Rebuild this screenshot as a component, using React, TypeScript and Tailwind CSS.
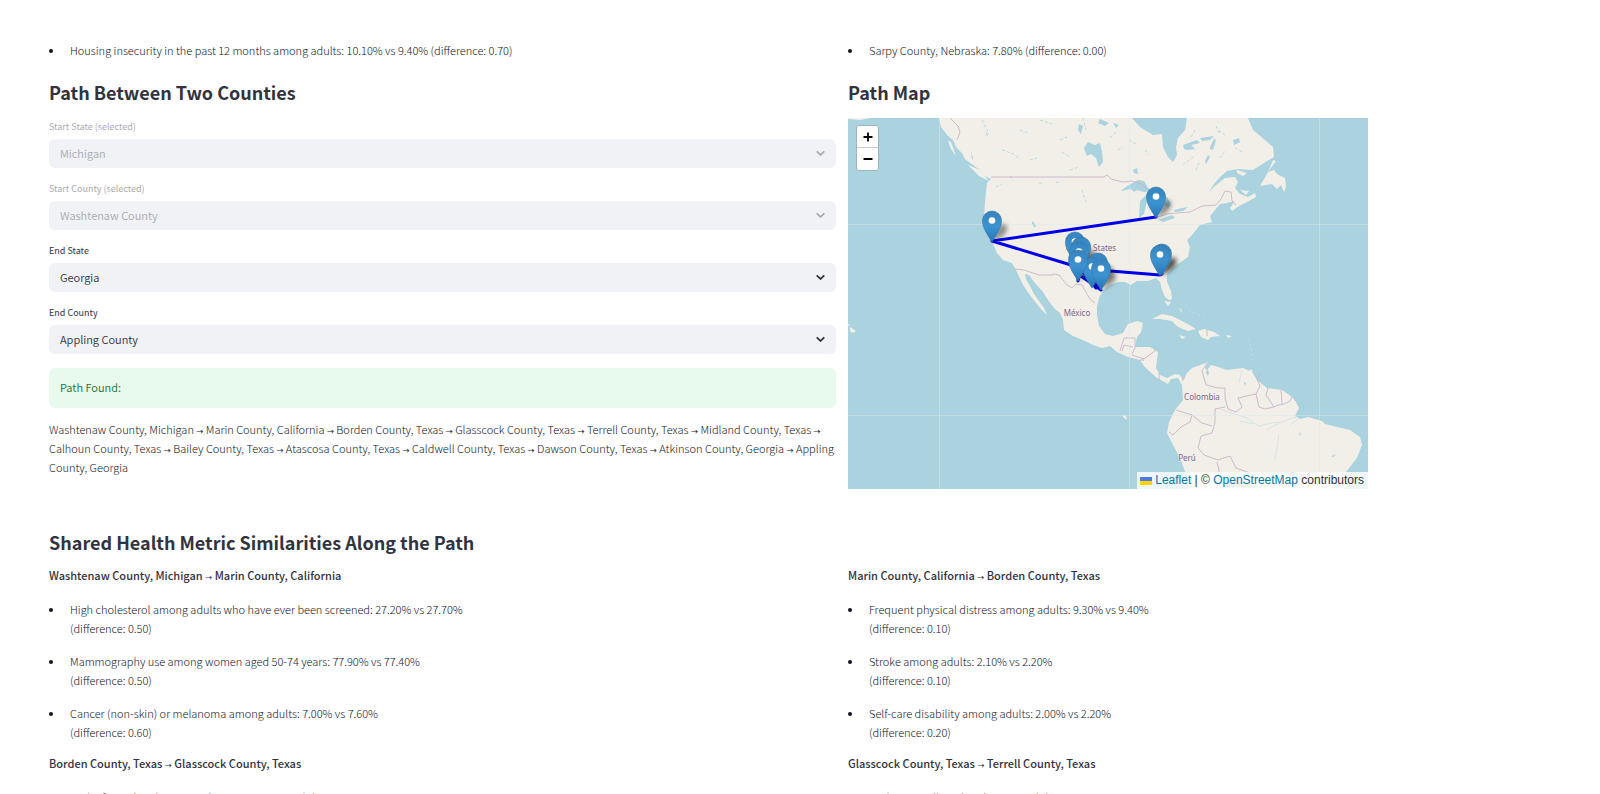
import React, { Fragment, useId } from "react";

const columns = "grid grid-cols-[787fr_703fr] gap-x-3";
const headingStyle = "text-[18px] font-bold leading-[28px] text-[#31333f]";

function ChevronDown() {
  return (
    <svg viewBox="0 0 24 24" aria-hidden="true" className="pointer-events-none absolute right-2 top-[7px] size-[15px]">
      <path fill="currentColor" d="M12.7 15.7a1 1 0 0 1-1.400 0L5.800 10.200a1.400 1.400 0 0 1 2-2L12 12.400l4.200-4.200a1.400 1.400 0 0 1 2 2z" />
    </svg>
  );
}

function SelectField({ label, value, disabled = false }: { label: string; value: string; disabled?: boolean }) {
  const id = useId();
  return (
    <div className={disabled ? "text-[#a9abb2]" : "text-[#31333f]"}>
      <label htmlFor={id} className="mb-1 block text-[9px] font-normal leading-[17px]">
        {label}
      </label>
      <div className="relative">
        <select
          id={id}
          disabled={disabled}
          defaultValue={value}
          className="block h-[29px] w-full appearance-none rounded-md bg-[#f0f2f6] px-[11px] text-[11px] font-[350] leading-[19px] opacity-100"
        >
          <option>{value}</option>
        </select>
        <ChevronDown />
      </div>
    </div>
  );
}

function Bullet({ children }: { children: React.ReactNode }) {
  return <li className="pl-1.5">{children}</li>;
}

function Route({ stops }: { stops: string[] }) {
  return (
    <>
      {stops.map((stop, index) => (
        <Fragment key={stop}>
          {index > 0 && (
            <>
              {"\u00a0"}
              <span className="text-[7px] font-medium leading-none">→</span>{" "}
            </>
          )}
          {stop}
        </Fragment>
      ))}
    </>
  );
}

type Metric = { text: string; difference: string };
type Step = { from: string; to: string; metrics: Metric[] };

const steps: Step[] = [
  {
    from: "Washtenaw County, Michigan",
    to: "Marin County, California",
    metrics: [
      { text: "High cholesterol among adults who have ever been screened: 27.20% vs 27.70%", difference: "0.50" },
      { text: "Mammography use among women aged 50-74 years: 77.90% vs 77.40%", difference: "0.50" },
      { text: "Cancer (non-skin) or melanoma among adults: 7.00% vs 7.60%", difference: "0.60" },
    ],
  },
  {
    from: "Marin County, California",
    to: "Borden County, Texas",
    metrics: [
      { text: "Frequent physical distress among adults: 9.30% vs 9.40%", difference: "0.10" },
      { text: "Stroke among adults: 2.10% vs 2.20%", difference: "0.10" },
      { text: "Self-care disability among adults: 2.00% vs 2.20%", difference: "0.20" },
    ],
  },
  {
    from: "Borden County, Texas",
    to: "Glasscock County, Texas",
    metrics: [{ text: "Lack of social and emotional support among adults: 30.60% vs 30.50%", difference: "0.10" }],
  },
  {
    from: "Glasscock County, Texas",
    to: "Terrell County, Texas",
    metrics: [{ text: "Feeling socially isolated among adults: 34.10% vs 34.10%", difference: "0.00" }],
  },
];

const path = [
  "Washtenaw County, Michigan",
  "Marin County, California",
  "Borden County, Texas",
  "Glasscock County, Texas",
  "Terrell County, Texas",
  "Midland County, Texas",
  "Calhoun County, Texas",
  "Bailey County, Texas",
  "Atascosa County, Texas",
  "Caldwell County, Texas",
  "Dawson County, Texas",
  "Atkinson County, Georgia",
  "Appling County, Georgia",
];

const pins = [
  [1156, 218], [992, 242], [1075, 263], [1081, 268], [1079, 273], [1162, 275],
  [1098, 284], [1092, 288], [1078, 281], [1101, 290], [1160, 276],
];

function Pin({ x, y }: { x: number; y: number }) {
  return (
    <g transform={`translate(${x} ${y})`}>
      <path d="M0 0C-7-11-9.500-15-9.500-21.500a9.500 9.500 0 0 1 19 0C9.500-15 7-11 0 0z" fill="url(#pin)" stroke="#3577a6" strokeWidth=".6" />
      <circle cy="-21.500" r="3.300" fill="#fff" />
    </g>
  );
}

function PathMap() {
  return (
    <div className="relative w-[520px] max-w-full overflow-hidden bg-[#aad3df] font-normal">
      <svg viewBox="848 118 520 371" role="img" aria-label="Path Map" className="block w-full">
        <defs>
          <linearGradient id="pin" x1="0" y1="0" x2="0" y2="1">
            <stop offset="0" stopColor="#3683bf" />
            <stop offset=".5" stopColor="#3c92cf" />
            <stop offset="1" stopColor="#2676bd" />
          </linearGradient>
          <filter id="soft" x="-50%" y="-50%" width="200%" height="200%">
            <feGaussianBlur stdDeviation="2" />
          </filter>
        </defs>
        <rect x="848" y="118" width="520" height="371" fill="#aad3df" />

        <g fill="#f2efe9">
          <path d="M939 118L941 127 948 136 953 140 956 147 962 153 965 159 973 165 980 170 983 175 991 179 987 183 986 192 985 203 984 217 987 230 992 242 997 253 1003 260 1012 263 1017 272 1022 283 1027 291 1033 299 1037 304 1041 309 1047 315 1044 308 1039 301 1034 294 1030 286 1026 279 1025 274 1029 275 1035 283 1043 292 1048 300 1054 308 1060 313 1063 320 1064 330 1073 336 1085 341 1093 345 1102 348 1110 346 1117 352 1128 357 1140 360 1144 366 1148 370 1157 378 1168 384 1171 379 1178 378 1182 385 1183 400 1175 410 1169 422 1167 433 1172 443 1180 458 1187 477 1188 489 1345 489 1346 472 1357 458 1362 445 1360 437 1350 430 1337 427 1325 424 1322 421 1308 417 1300 419 1295 416 1299 408 1296 402 1292 397 1282 390 1267 388 1257 380 1252 372 1243 368 1227 370 1215 366 1211 365 1207 370 1205 368 1208 362 1203 364 1192 368 1187 373 1183 380 1180 375 1175 374 1167 378 1160 375 1156 368 1158 352 1150 347 1135 347 1137 337 1141 332 1143 323 1137 321 1128 324 1123 333 1113 336 1105 334 1099 326 1097 315 1097 307 1099 298 1103 290 1110 285 1118 282 1125 282 1131 285 1137 281 1148 281 1156 278 1160 282 1162 290 1165 297 1169 300 1172 299 1171 291 1167 282 1167 274 1175 266 1188 257 1190 247 1187 240 1192 235 1200 225 1212 222 1210 216 1215 210 1220 204 1227 203 1235 201 1230 208 1232 211 1239 206 1247 202 1256 197 1255 193 1248 197 1240 194 1235 188 1238 182 1235 177 1225 178 1215 186 1209 192 1214 184 1220 177 1227 171 1238 169 1253 170 1267 161 1274 157 1273 147 1265 140 1253 130 1248 118 1187 118 1185 130 1178 138 1176 147 1177 155 1173 162 1168 157 1163 147 1162 134 1153 135 1140 127 1132 118z" />
          <path d="M1273 160l-5 12-8 14 12-2 5 5 4-4 3 7 2-5-1-9-8-4-3-4-6 2 8-11z" />
          <path d="M1237 170l10 3-4 3-6-3zM1240 190l9 1-3 4zM948 141l3 1 5 14-5-7zM968 165l12 5 9 11-10-5z" />
          <path d="M1152 319l10-5 10 2 14 7 10 6-8 2-10-4-6-6-12-2zM1198 331l6-2 10 3 6 4-9 1-3 3-7-3zM1179 335l7 2-4 2zM1226 335l6 1-4 2zM1250 369l3 2-3 2zM1164 301l7 1-3 4zM1179 307l3 4-1 1zM850 327l6 4-3 2-3-2zM848 324l2 1-2 1zM848 118h22l-10 2-12-1z" />
          <path d="M1122 415l4 1 1 4-3-2z" />
        </g>

        <g fill="#aad3df">
          <path d="M1120 191l9-6 9-5 6 1 4 7 5 3-9 1-7-2-3 2-3-3zM1139 218l1-17 7-7 5 1-5 6-3 13zM1159 194l8 3 4 7-3 4-5-5-2 6zM1158 220l14-5 3 3-12 4zM1174 210l8-2 6-1-5 4-8 1z" />
          <path d="M1088 142l7 3 5-2 2 9 1 10-4 5-3-9-5-4-4 2-3-8z" />
          <path d="M1079 124l4 2-2 8-3-4zM1100 119l9 4-4 3-7-3zM1113 123l6 2-3 3zM1133 170l4-2 1 6-4-1zM1207 369l2 3-1 4-2-3zM1032 221l4 4-1 3-3-4zM971 151l2 7-1 2zM985 131l3 4-1 1zM1183 145l14-5 3 3-9 2 4 4-8 1-3-1zM1200 138l14-2-4 4-8 1zM1210 147l4-8 2 1-3 10-3-1zM1233 140l6-2 1 4-6 3zM1172 124l5-2 1 4-5 2zM1205 161l3-6 2 2-4 7zM1299 431l2 3-1 2zM1331 456l6-2-4 3zM1244 382l2 1-1 3z" />
        </g>

        <g fill="none" stroke="#aad3df" strokeWidth=".8">
          <path d="M982 120l7 14M1002 150l12 4 4 4M1020 130l8 3M1040 120l12 4M1060 140l7-3M1062 152l8 5M1070 170l9-3M1030 160l7-2M1083 118l3 12M1110 138l6-6M1118 150l5-3M1129 140l7 4M1145 150l4 5M1183 165l10-8M1196 170l4-9M1220 158l5-7M1225 135l-8-6M1242 152l-7-4M1216 126l4 8M1195 130l-4 7M1082 190l3 10 2 3M1039 184l4-2M1056 182l5 1M996 187l6-3M1010 176l3 5" strokeDasharray="3 2" />
          <path d="M1220 409l12 4 15 5 12 8 13-3 10-1 8-3 6-2M1240 421l14 3M1266 430l13-7M1275 460l4-25M1290 425l8-6M1242 370l-3 13" strokeOpacity=".5" />
          <path d="M1248 340l3 7 1 6-1 8M1186 305l8 9M1195 312l9 6" stroke="#e8ebe4" strokeDasharray="1 4" />
        </g>

        <g fill="none" stroke="#c9b4c8" strokeWidth=".9">
          <path d="M991 177H1104l3-2 4 4 12 3 8-1 10 3 10 7 4 14 2 8 1 4 9-3 9-1 14-1 12-6 14-1 5-6 4-8 6 1 1 9 4 4" />
          <path d="M950 118l8 8 2 6-3 8M1015 269l9 1 15 5h14v-1l6 1 8 10 5 3 4-4 6 1 5 9 3 5 5 4" />
          <path d="M1120 351l4-13h11v10l-3 6M1132 355l12 4 12-9M1133 347l-9-2-2 6M1144 360l-4 0M1159 373v7M1207 330v6M1182 381l3-4" />
          <path d="M1207 363l-5 8 4 14 12 3h7v10l3 11 8 3 6-5-4-9 18-4 4-8-3-7 3-6M1256 394l3 13 6 2 9-2-8-12 2-7M1273 407l9-3-1-14M1282 405l8-4 2-4M1225 407l-10 2v13l-3 11-11 3-3 12 6 7 14 5 12-4 6 12 14 5M1176 410l16 5-2 7-9 5-8 8-4-3M1192 415l10 8 10 3M1217 462l2 8-2 19" />
        </g>

        <g stroke="#d9eaec" strokeOpacity=".5">
          <path d="M939.500 118v371M1129.500 118v371M1319.500 118v371M848 224.500h520M848 415.500h520" />
        </g>

        <g fill="#83648c" stroke="#f2efe9" strokeWidth="1" paintOrder="stroke" textAnchor="middle" className="font-['Noto_Sans',sans-serif] text-[8px]">
          <text x="1091" y="251">United States</text>
          <text x="1077" y="316">México</text>
          <text x="1202" y="400">Colombia</text>
          <text x="1187" y="461">Perú</text>
          <text x="1300" y="479">Brasil</text>
          <text x="1238" y="487">Bolivia</text>
        </g>

        <path
          fill="none"
          stroke="#0000e6"
          strokeWidth="3"
          strokeLinejoin="round"
          strokeLinecap="round"
          d="M1156 217L992 241 1081 268 1080 273 1078 281 1078 274 1101 290 1076 264 1096 288 1099 283 1080 268 1098 270 1160 275 1162 274"
        />
        <g fill="#000" fillOpacity=".4" filter="url(#soft)">
          {pins.map(([x, y]) => (
            <path key={`${x}-${y}`} d={`M${x} ${y}l6-15q8-6 9 0t-7 11z`} />
          ))}
        </g>
        {pins.map(([x, y]) => (
          <Pin key={`${x}-${y}`} x={x} y={y} />
        ))}
      </svg>

      <div className="absolute left-2 top-[7px] flex flex-col overflow-hidden rounded-[3px] border border-[#9fb4ba] bg-white text-black">
        <button type="button" aria-label="Zoom in" className="flex h-[22px] w-[21px] items-center justify-center border-b border-[#ccc]">
          <svg viewBox="0 0 10 10" className="size-2.5"><path d="M5 .5v9M.5 5h9" stroke="currentColor" strokeWidth="1.800" /></svg>
        </button>
        <button type="button" aria-label="Zoom out" className="flex h-[22px] w-[21px] items-center justify-center">
          <svg viewBox="0 0 10 10" className="size-2.5"><path d="M.5 5h9" stroke="currentColor" strokeWidth="1.800" /></svg>
        </button>
      </div>

      <div className="absolute bottom-0 right-0 flex items-center gap-[3px] bg-white/80 pl-[3px] pr-1 font-['Liberation_Sans',sans-serif] text-[12px] leading-[17px] text-[#333]">
        <svg viewBox="0 0 12 8" aria-hidden="true" className="h-2 w-3">
          <path fill="#4c7be1" d="M0 0h12v4H0z" />
          <path fill="#ffd500" d="M0 4h12v4H0z" />
        </svg>
        <p>
          <a href="https://leafletjs.com" className="text-[#0078a8]">Leaflet</a> | ©{" "}
          <a href="https://www.openstreetmap.org/copyright" className="text-[#0078a8]">OpenStreetMap</a> contributors
        </p>
      </div>
    </div>
  );
}

export default function App() {
  return (
    <main className="h-screen overflow-hidden bg-white px-[49px] pt-[41px] font-['Noto_Sans_CJK_SC',sans-serif] text-[11px] font-light leading-[19px] text-[#12141f]">
      <div className={columns}>
        <ul className="list-disc pl-[15px]">
          <Bullet>Housing insecurity in the past 12 months among adults: 10.10% vs 9.40% (difference: 0.70)</Bullet>
        </ul>
        <ul className="list-disc pl-[15px]">
          <Bullet>Sarpy County, Nebraska: 7.80% (difference: 0.00)</Bullet>
        </ul>
      </div>

      <div className={`mt-[18px] ${columns}`}>
        <section>
          <h3 className={`mb-3 ${headingStyle}`}>Path Between Two Counties</h3>
          <div className="flex flex-col gap-3">
            <SelectField label="Start State (selected)" value="Michigan" disabled />
            <SelectField label="Start County (selected)" value="Washtenaw County" disabled />
            <SelectField label="End State" value="Georgia" />
            <SelectField label="End County" value="Appling County" />
          </div>
          <div role="status" className="mt-3.5 rounded-md bg-[#e8f9ee] px-[11px] pb-[11px] pt-2.5 font-[350] text-[#177233]">
            Path Found:
          </div>
          <p className="-mr-1 mt-3">
            <Route stops={path} />
          </p>
        </section>
        <section>
          <h3 className={`mb-3 ${headingStyle}`}>Path Map</h3>
          <PathMap />
        </section>
      </div>

      <h3 className={`mb-2.5 mt-[39px] ${headingStyle}`}>Shared Health Metric Similarities Along the Path</h3>
      <div className={`${columns} gap-y-3`}>
        {steps.map((step) => (
          <section key={step.from}>
            <h4 className="font-medium text-[#31333f]">
              <Route stops={[step.from, step.to]} />
            </h4>
            <ul className="mt-[15px] flex list-disc flex-col gap-3.5 pl-[15px]">
              {step.metrics.map((metric) => (
                <Bullet key={metric.text}>
                  {metric.text}
                  <br />
                  (difference: {metric.difference})
                </Bullet>
              ))}
            </ul>
          </section>
        ))}
      </div>
    </main>
  );
}
